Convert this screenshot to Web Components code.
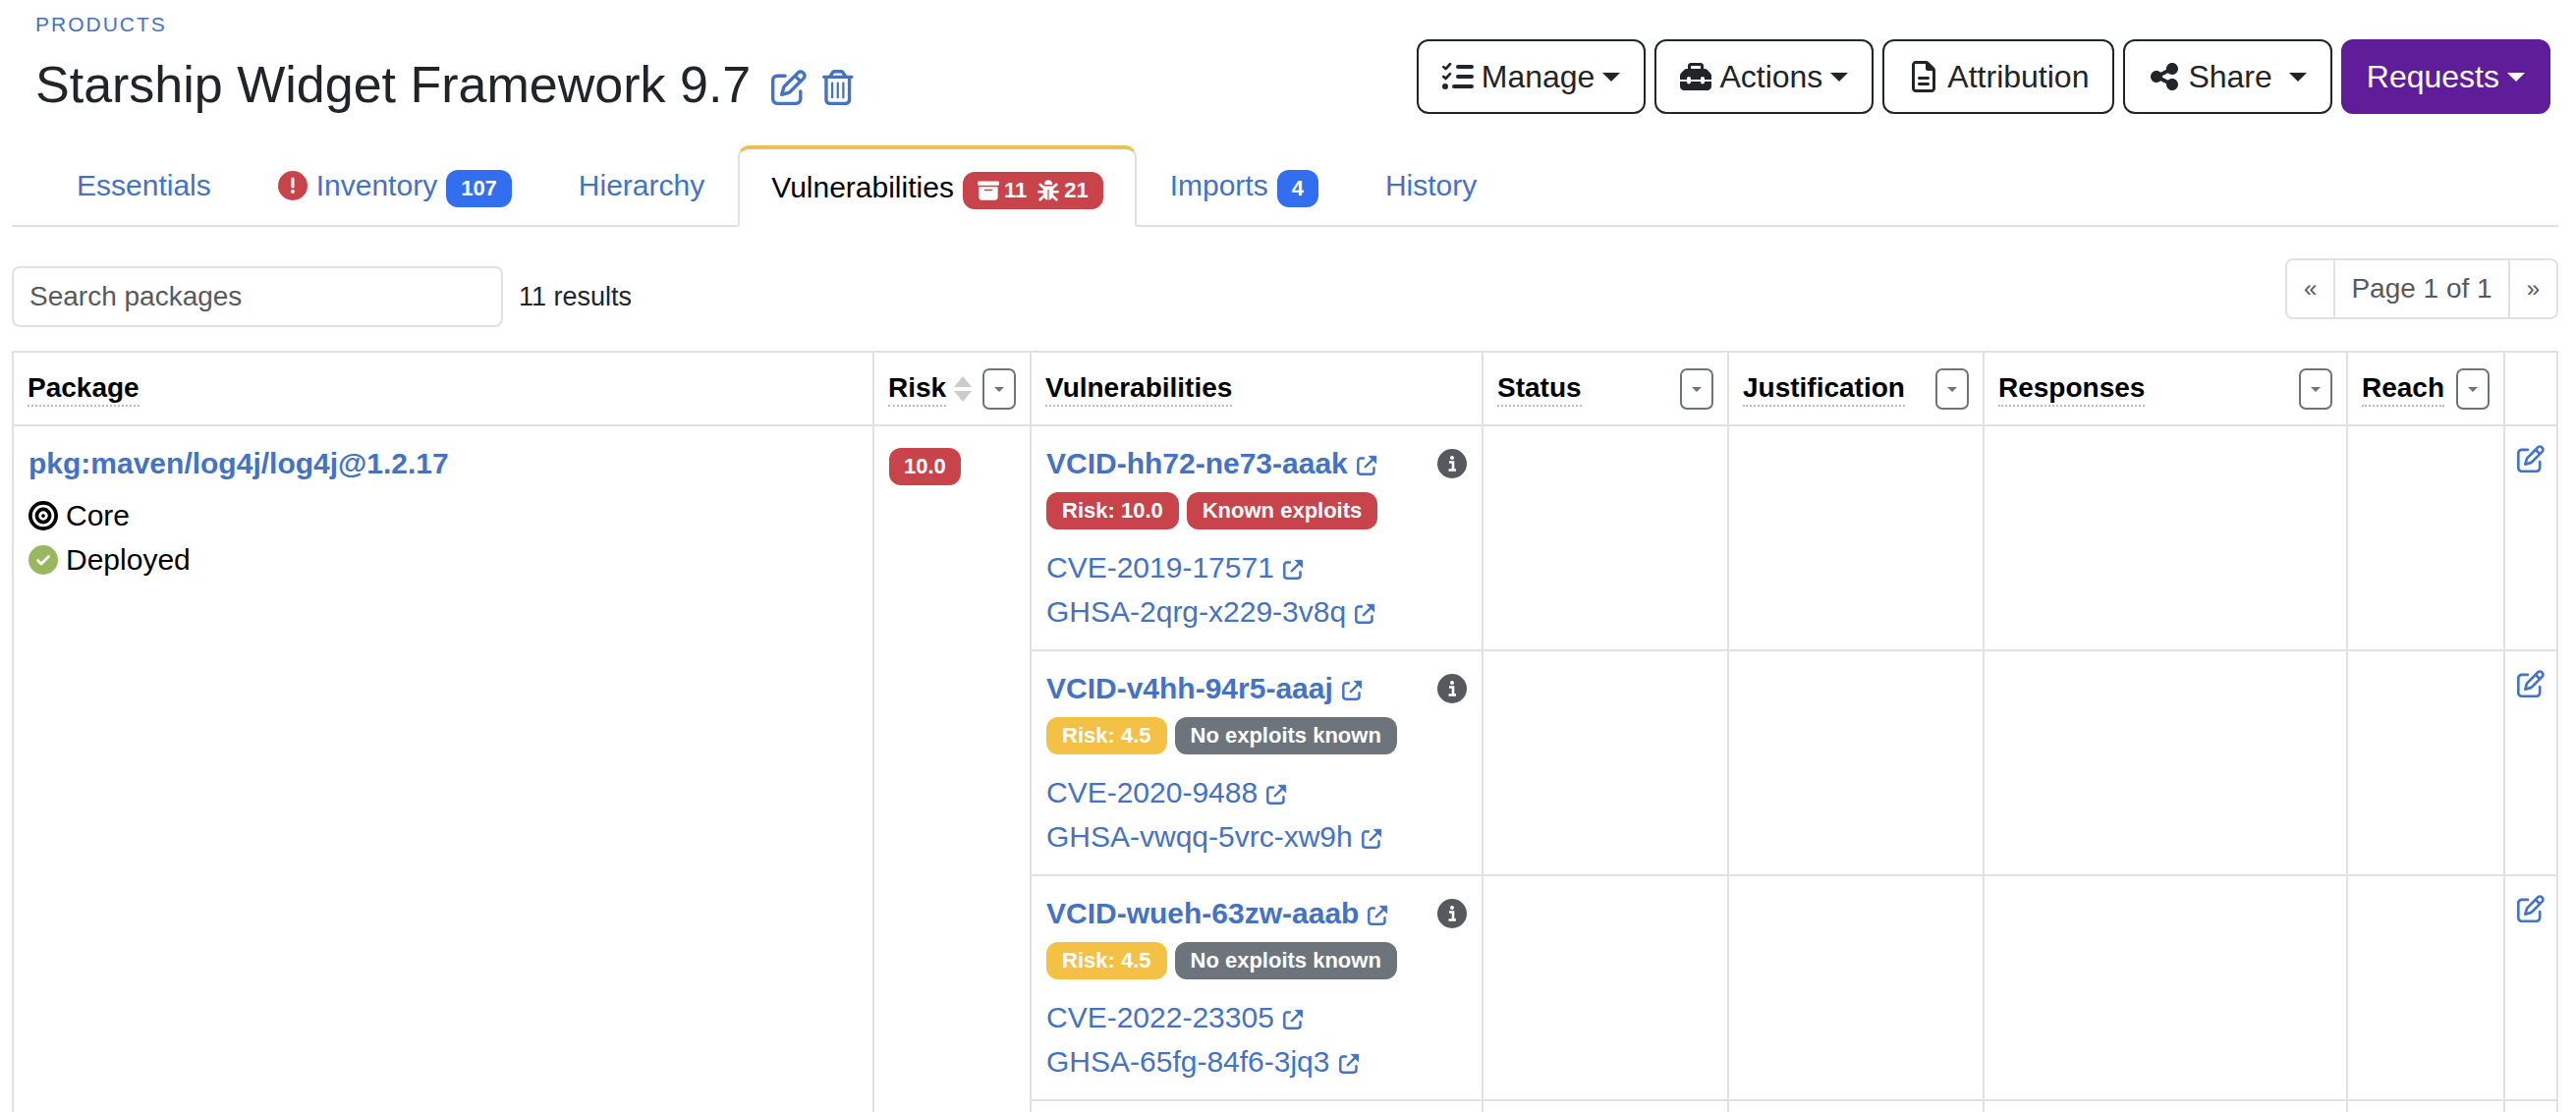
<!DOCTYPE html>
<html lang="en">
<head>
<meta charset="utf-8">
<title>Starship Widget Framework 9.7</title>
<style>
  body {
    --link: #4472c4;
    --line: #dfe1e6;
    --dark: #212529;
    --danger: #c8444a;
    --muted: #565a5e;
    margin: 0;
    height: 100vh;
    overflow: hidden;
    background: #fff;
    color: #000;
    font-family: "Liberation Sans", Arial, sans-serif;
    font-size: 30px;
    line-height: 45px;
  }

  main {
    padding: 10px 18px 0 12px;
  }
</style>
</head>
<body>
<main>
  <product-header name="Starship Widget Framework 9.7">
    <action-button icon="tasks" caret>Manage</action-button>
    <action-button icon="toolbox" caret>Actions</action-button>
    <action-button icon="file">Attribution</action-button>
    <action-button icon="share" caret wide>Share</action-button>
    <action-button primary caret>Requests</action-button>
  </product-header>

  <tab-bar>
    <tab-item>Essentials</tab-item>
    <tab-item>
      <app-icon slot="icon" name="alert" size="30"></app-icon>
      Inventory
      <label-badge slot="badge" color="#326ef0">107</label-badge>
    </tab-item>
    <tab-item>Hierarchy</tab-item>
    <tab-item active>
      Vulnerabilities
      <label-badge slot="badge">
        <app-icon name="archive" size="22"></app-icon><span>11</span>
        <app-icon name="bug" size="22" style="margin-left: 6px"></app-icon><span>21</span>
      </label-badge>
    </tab-item>
    <tab-item>Imports<label-badge slot="badge" color="#326ef0">4</label-badge></tab-item>
    <tab-item>History</tab-item>
  </tab-bar>

  <list-toolbar count="11 results" page="Page 1 of 1"></list-toolbar>
  <vulnerability-table></vulnerability-table>
</main>

<script>
const ICONS = {
  edit: ['0 0 512 512', '<path d="M441 58.9L453.1 71c9.4 9.4 9.4 24.6 0 33.9L424 134.1 377.9 88 407 58.9c9.4-9.4 24.6-9.4 33.9 0zM209.8 256.2L344 121.9 390.1 168 255.8 302.2c-2.9 2.9-6.5 5-10.4 6.1l-58.5 16.7 16.7-58.5c1.1-3.9 3.2-7.5 6.1-10.4zM373.1 25L175.8 222.2c-8.7 8.7-15 19.4-18.3 31.1l-28.6 100c-2.4 8.4-.1 17.4 6.1 23.6s15.2 8.5 23.6 6.1l100-28.6c11.8-3.4 22.5-9.7 31.1-18.3L487 138.9c28.1-28.1 28.1-73.7 0-101.8L474.9 25C446.8-3.1 401.2-3.1 373.1 25zM88 64C39.4 64 0 103.4 0 152V424c0 48.6 39.4 88 88 88H360c48.6 0 88-39.4 88-88V312c0-13.3-10.7-24-24-24s-24 10.7-24 24V424c0 22.1-17.9 40-40 40H88c-22.1 0-40-17.9-40-40V152c0-22.1 17.9-40 40-40H200c13.3 0 24-10.7 24-24s-10.7-24-24-24H88z"/>'],
  trash: ['0 0 448 512', '<path d="M170.5 51.6L151.5 80h145l-19-28.4c-1.5-2.2-4-3.6-6.7-3.6H177.1c-2.7 0-5.2 1.3-6.7 3.6zm147-26.6L354.2 80H368h48 8c13.3 0 24 10.7 24 24s-10.7 24-24 24h-8V432c0 44.2-35.8 80-80 80H112c-44.2 0-80-35.8-80-80V128H24c-13.3 0-24-10.7-24-24S10.7 80 24 80h8H80 93.8l36.7-55.1C140.9 9.4 158.4 0 177.1 0h93.7c18.7 0 36.2 9.4 46.6 24.9zM80 128V432c0 17.7 14.3 32 32 32H336c17.7 0 32-14.3 32-32V128H80zm80 64V400c0 8.8-7.2 16-16 16s-16-7.2-16-16V192c0-8.8 7.2-16 16-16s16 7.2 16 16zm80 0V400c0 8.8-7.2 16-16 16s-16-7.2-16-16V192c0-8.8 7.2-16 16-16s16 7.2 16 16zm80 0V400c0 8.8-7.2 16-16 16s-16-7.2-16-16V192c0-8.8 7.2-16 16-16s16 7.2 16 16z"/>'],
  share: ['0 0 448 512', '<path d="M352 224c53 0 96-43 96-96s-43-96-96-96s-96 43-96 96c0 4 .2 8 .7 11.9l-94.1 47C145.4 170.2 121.9 160 96 160c-53 0-96 43-96 96s43 96 96 96c25.900 0 49.400-10.200 66.600-26.900l94.100 47c-.5 3.900-.7 7.800-.7 11.900c0 53 43 96 96 96s96-43 96-96s-43-96-96-96c-25.900 0-49.400 10.200-66.600 26.900l-94.100-47c.5-3.900 .7-7.800 .7-11.900s-.2-8-.7-11.900l94.100-47C302.600 213.800 326.100 224 352 224z"/>'],
  file: ['0 0 384 512', '<path d="M64 464c-8.8 0-16-7.2-16-16V64c0-8.8 7.2-16 16-16H224v80c0 17.7 14.3 32 32 32h80V448c0 8.8-7.2 16-16 16H64zM64 0C28.7 0 0 28.7 0 64V448c0 35.3 28.7 64 64 64H320c35.3 0 64-28.7 64-64V154.5c0-17-6.7-33.3-18.7-45.3L274.7 18.7C262.7 6.7 246.5 0 229.5 0H64zm56 256c-13.3 0-24 10.7-24 24s10.7 24 24 24H264c13.3 0 24-10.7 24-24s-10.7-24-24-24H120zm0 96c-13.3 0-24 10.7-24 24s10.7 24 24 24H264c13.3 0 24-10.7 24-24s-10.7-24-24-24H120z"/>'],
  tasks: ['0 0 512 512', '<g fill="none" stroke="currentColor" stroke-linecap="round" stroke-linejoin="round"><path stroke-width="42" d="M22 98l34 32 72-78M22 256l34 32 72-78"/><path stroke-width="64" d="M256 96h224M256 256h224M192 416h288"/></g><circle cx="48" cy="416" r="48"/>'],
  toolbox: ['0 0 512 512', '<path fill-rule="evenodd" d="M176 32h160c27 0 48 21 48 48v48h16c18 0 34 7 46 19l47 47c12 12 19 28 19 46v64H400v-16c0-18-14-32-32-32s-32 14-32 32v16H176v-16c0-18-14-32-32-32s-32 14-32 32v16H0v-64c0-18 7-34 19-46l47-47c12-12 28-19 46-19h16V80c0-27 21-48 48-48zm0 48v48h160V80z"/><path d="M0 336h112v8c0 18 14 32 32 32s32-14 32-32v-8h160v8c0 18 14 32 32 32s32-14 32-32v-8h112v80c0 35-29 64-64 64H64c-35 0-64-29-64-64z"/>'],
  archive: ['0 0 512 512', '<rect y="32" width="512" height="104" rx="32"/><path fill-rule="evenodd" d="M32 168h448v248c0 35-29 64-64 64H96c-35 0-64-29-64-64zm144 56c-12 0-20 8-20 20s8 20 20 20h160c12 0 20-8 20-20s-8-20-20-20z"/>'],
  bug: ['0 0 512 512', '<path d="M160 104a96 96 0 0 1 192 0v14H160z"/><path d="M136 150h240v200c0 66-46 122-106 130V230h-28v250c-60-8-106-64-106-130z"/><g fill="none" stroke="currentColor" stroke-width="60" stroke-linecap="round"><path d="M150 190L62 112M362 190l88-78M136 286H32M376 286h104M156 380l-94 92M356 380l94 92"/></g>'],
  external: ['0 0 24 24', '<path fill="none" stroke="currentColor" stroke-width="2.8" stroke-linecap="round" stroke-linejoin="round" d="M8 4H4.500a3 3 0 0 0-3 3v12.500a3 3 0 0 0 3 3H17a3 3 0 0 0 3-3V15M10 14L19 5"/><path d="M14 1.500h8.500V10z" stroke="currentColor" stroke-linejoin="round"/>'],
  alert: ['0 0 30 30', '<circle cx="15" cy="15" r="15" fill="#c8444a"/><path d="M15 8v8" stroke="#fff" stroke-width="3" stroke-linecap="round"/><circle cx="15" cy="21" r="2" fill="#fff"/>'],
  info: ['0 0 30 30', '<circle cx="15" cy="15" r="15"/><circle cx="15" cy="9" r="2" fill="#fff"/><path d="M12 13.5h4V21M11.5 21.5h7.5" fill="none" stroke="#fff" stroke-width="2.6"/>'],
  core: ['0 0 512 512', '<g fill="none" stroke="currentColor" stroke-width="64"><circle cx="256" cy="256" r="224"/><circle cx="256" cy="256" r="112"/></g><circle cx="256" cy="256" r="32"/>'],
  deployed: ['0 0 30 30', '<circle cx="15" cy="15" r="15" fill="#99b75f"/><path d="M9.5 15.5l3.5 3.5 7.5-7.5" fill="none" stroke="#fff" stroke-width="2.8" stroke-linecap="round" stroke-linejoin="round"/>'],
  sort: ['0 0 18 26', '<path d="M9 0l9 11H0zM9 26l9-11H0z"/>'],
  caret: ['0 0 18 9', '<path d="M0 0h18L9 9z"/>']
};

class AppIcon extends HTMLElement {
  connectedCallback() {
    const [box, body] = ICONS[this.getAttribute('name')];
    const size = this.getAttribute('size') || 32;
    this.attachShadow({ mode: 'open' }).innerHTML = `
      <style>
        :host { display: inline-flex; justify-content: center; flex: none; }
        svg { display: block; fill: currentColor; }
      </style>
      <svg viewBox="${box}" height="${size}" aria-hidden="true">${body}</svg>
    `;
  }
}

class LabelBadge extends HTMLElement {
  connectedCallback() {
    this.attachShadow({ mode: 'open' }).innerHTML = `
      <style>
        :host {
          display: inline-flex;
          align-items: center;
          gap: 5px;
          padding: 8px 15px;
          border-radius: 12px;
          background: ${this.getAttribute('color') || 'var(--danger)'};
          color: #fff;
          font-size: 22px;
          font-weight: bold;
          line-height: 22px;
          white-space: nowrap;
        }
      </style>
      <slot></slot>
    `;
  }
}

class ActionButton extends HTMLElement {
  connectedCallback() {
    const icon = this.getAttribute('icon');
    this.attachShadow({ mode: 'open' }).innerHTML = `
      <style>
        :host { display: block; }
        button {
          display: flex;
          align-items: center;
          gap: 8px;
          padding: 12px 24px;
          border: 2px solid var(--dark);
          border-radius: 12px;
          background: #fff;
          color: var(--dark);
          font: 32px/48px "Liberation Sans", Arial, sans-serif;
          cursor: pointer;
        }
        .icon { width: 32px; }
        :host([wide]) .caret { margin-left: 9px; }
        :host([primary]) button { background: #5f1d99; border-color: #5f1d99; color: #fff; }
      </style>
      <button type="button">
        ${icon ? `<app-icon class="icon" name="${icon}" size="32"></app-icon>` : ''}
        <slot></slot>
        ${this.hasAttribute('caret') ? '<app-icon class="caret" name="caret" size="9"></app-icon>' : ''}
      </button>
    `;
  }
}

class ProductHeader extends HTMLElement {
  connectedCallback() {
    this.attachShadow({ mode: 'open' }).innerHTML = `
      <style>
        :host {
          display: flex;
          justify-content: space-between;
          align-items: flex-start;
          padding: 0 8px 0 24px;
        }
        a { color: var(--link); text-decoration: none; }
        .parent {
          display: block;
          margin-bottom: 15px;
          font-size: 21px;
          line-height: 30px;
          letter-spacing: 2px;
        }
        .title { display: flex; align-items: center; gap: 16px; }
        .title a { padding-top: 6px; }
        .title app-icon { display: flex; }
        h1 {
          margin: 0 5px 0 0;
          color: var(--dark);
          font-size: 52px;
          font-weight: normal;
          line-height: 62px;
        }
        .actions { display: flex; gap: 9px; padding-top: 30px; }
      </style>
      <div>
        <a class="parent" href="#">PRODUCTS</a>
        <div class="title">
          <h1>${this.getAttribute('name')}</h1>
          <a href="#" aria-label="Edit"><app-icon name="edit" size="36"></app-icon></a>
          <a href="#" aria-label="Delete"><app-icon name="trash" size="36"></app-icon></a>
        </div>
      </div>
      <div class="actions"><slot></slot></div>
    `;
  }
}

class TabBar extends HTMLElement {
  connectedCallback() {
    this.attachShadow({ mode: 'open' }).innerHTML = `
      <style>
        :host { display: block; margin-top: 31px; }
        nav {
          display: flex;
          align-items: flex-start;
          height: 81px;
          padding-left: 32px;
          border-bottom: 2px solid var(--line);
        }
      </style>
      <nav><slot></slot></nav>
    `;
  }
}

class TabItem extends HTMLElement {
  connectedCallback() {
    this.attachShadow({ mode: 'open' }).innerHTML = `
      <style>
        :host { display: block; }
        a {
          display: flex;
          align-items: flex-end;
          gap: 9px;
          padding: 16px 32px;
          border: 2px solid transparent;
          color: var(--link);
          text-decoration: none;
        }
        :host([active]) a {
          border-color: #e9c155 var(--line) #fff;
          border-top-width: 4px;
          border-radius: 12px 12px 0 0;
          background: #fff;
          color: #000;
        }
        ::slotted([slot=icon]) { align-self: center; }
      </style>
      <a href="#"><slot name="icon"></slot><span><slot></slot></span><slot name="badge"></slot></a>
    `;
  }
}

class ListToolbar extends HTMLElement {
  connectedCallback() {
    this.attachShadow({ mode: 'open' }).innerHTML = `
      <style>
        :host {
          display: flex;
          justify-content: space-between;
          align-items: flex-start;
          margin: 32px 0 24px;
          font-size: 27px;
        }
        .search { display: flex; align-items: center; gap: 16px; padding-top: 8px; color: var(--dark); }
        input {
          box-sizing: border-box;
          width: 500px;
          height: 62px;
          padding: 0 16px;
          border: 2px solid var(--line);
          border-radius: 8px;
          font: 28px "Liberation Sans", Arial, sans-serif;
        }
        input::placeholder { color: var(--muted); opacity: 1; }
        .pages {
          display: flex;
          border: 2px solid var(--line);
          border-radius: 8px;
          color: var(--muted);
          font-size: 28px;
          line-height: 58px;
        }
        .pages > * { padding: 0 16px; color: inherit; text-decoration: none; }
        .pages > * + * { border-left: 2px solid var(--line); }
        .pages a { padding: 0 17px; font-size: 24px; }
      </style>
      <div class="search">
        <input type="search" placeholder="Search packages" aria-label="Search packages">
        <span>${this.getAttribute('count')}</span>
      </div>
      <div class="pages">
        <a href="#" aria-label="Previous page">«</a>
        <span>${this.getAttribute('page')}</span>
        <a href="#" aria-label="Next page">»</a>
      </div>
    `;
  }
}

// Column title with optional sort arrows and filter drop-down
class ColumnTitle extends HTMLElement {
  connectedCallback() {
    this.attachShadow({ mode: 'open' }).innerHTML = `
      <style>
        :host { display: flex; align-items: center; height: 42px; }
        span { border-bottom: 2px dotted #bbb; line-height: 34px; }
        .sort { margin-left: 8px; color: #ccc; }
        button {
          display: flex;
          align-items: center;
          justify-content: center;
          width: 34px;
          height: 42px;
          margin-left: auto;
          padding: 0;
          border: 2px solid #6c757d;
          border-radius: 7px;
          background: #fff;
          color: #6c757d;
        }
      </style>
      <span><slot></slot></span>
      ${this.hasAttribute('sort') ? '<app-icon class="sort" name="sort" size="26"></app-icon>' : ''}
      ${this.hasAttribute('filter') ? '<button type="button" aria-label="Filter"><app-icon name="caret" size="5"></app-icon></button>' : ''}
    `;
  }
}

class VulnerabilityEntry extends HTMLElement {
  connectedCallback() {
    const known = this.hasAttribute('exploited');
    const link = id => `<a href="#">${id}<app-icon name="external" size="21"></app-icon></a>`;
    this.attachShadow({ mode: 'open' }).innerHTML = `
      <style>
        :host { display: block; }
        a { display: flex; align-items: center; gap: 9px; color: var(--link); text-decoration: none; }
        a app-icon { padding-top: 3px; }
        .head { display: flex; align-items: center; justify-content: space-between; font-weight: bold; }
        .head > app-icon { color: var(--muted); }
        .badges { display: flex; gap: 8px; margin: 7px 0 16px; }
        .badges label-badge { padding: 8px 16px; }
      </style>
      <div class="head">${link(this.getAttribute('vcid'))}<app-icon name="info" size="30"></app-icon></div>
      <div class="badges">
        <label-badge color="${known ? 'var(--danger)' : '#f4c145'}">Risk: ${this.getAttribute('risk')}</label-badge>
        <label-badge color="${known ? 'var(--danger)' : '#6d747c'}">${known ? 'Known exploits' : 'No exploits known'}</label-badge>
      </div>
      ${this.getAttribute('aliases').split(' ').map(link).join('')}
    `;
  }
}

class VulnerabilityTable extends HTMLElement {
  constructor() {
    super();
    this.attachShadow({ mode: 'open' });
    this._rows = [
      { vcid: 'VCID-hh72-ne73-aaak', risk: '10.0', exploited: true, aliases: 'CVE-2019-17571 GHSA-2qrg-x229-3v8q' },
      { vcid: 'VCID-v4hh-94r5-aaaj', risk: '4.5', aliases: 'CVE-2020-9488 GHSA-vwqq-5vrc-xw9h' },
      { vcid: 'VCID-wueh-63zw-aaab', risk: '4.5', aliases: 'CVE-2022-23305 GHSA-65fg-84f6-3jq3' }
    ];
  }

  connectedCallback() {
    this.render();
  }

  render() {
    const packageCells = `
      <td rowspan="${this._rows.length + 1}">
        <a class="package" href="#">pkg:maven/log4j/log4j@1.2.17</a>
        <div class="state"><app-icon name="core" size="30"></app-icon>Core</div>
        <div class="state"><app-icon name="deployed" size="30"></app-icon>Deployed</div>
      </td>
      <td rowspan="${this._rows.length + 1}"><label-badge class="risk">10.0</label-badge></td>
    `;

    const rowsHtml = this._rows.map((row, i) => `
      <tr>
        ${i === 0 ? packageCells : ''}
        <td><vulnerability-entry vcid="${row.vcid}" risk="${row.risk}" aliases="${row.aliases}" ${row.exploited ? 'exploited' : ''}></vulnerability-entry></td>
        <td></td><td></td><td></td><td></td>
        <td class="edit"><a href="#" aria-label="Edit ${row.vcid}"><app-icon name="edit" size="28"></app-icon></a></td>
      </tr>
    `).join('');

    this.shadowRoot.innerHTML = `
      <style>
        :host { display: block; }
        table { width: 100%; table-layout: fixed; border-collapse: collapse; }
        th, td {
          padding: 15px 15px 16px;
          border: 2px solid var(--line);
          text-align: left;
          vertical-align: top;
        }
        th { padding: 16px 14px 15px; font-size: 28px; }
        a { color: var(--link); text-decoration: none; }
        .package { display: block; margin-bottom: 8px; font-weight: bold; }
        .state { display: flex; align-items: center; gap: 8px; }
        .risk { margin-top: 7px; vertical-align: top; }
        .edit { padding-left: 0; padding-right: 0; }
        .edit a { display: flex; justify-content: center; padding-top: 4px; }
        .more td { height: 196px; }
      </style>
      <table>
        <colgroup>
          <col>
          <col style="width: 160px">
          <col style="width: 460px">
          <col style="width: 250px">
          <col style="width: 260px">
          <col style="width: 370px">
          <col style="width: 160px">
          <col style="width: 54px">
        </colgroup>
        <thead>
          <tr>
            <th><column-title>Package</column-title></th>
            <th><column-title sort filter>Risk</column-title></th>
            <th><column-title>Vulnerabilities</column-title></th>
            <th><column-title filter>Status</column-title></th>
            <th><column-title filter>Justification</column-title></th>
            <th><column-title filter>Responses</column-title></th>
            <th><column-title filter>Reach</column-title></th>
            <th></th>
          </tr>
        </thead>
        <tbody>
          ${rowsHtml}
          <tr class="more"><td></td><td></td><td></td><td></td><td></td><td></td></tr>
        </tbody>
      </table>
    `;
  }
}

customElements.define('app-icon', AppIcon);
customElements.define('label-badge', LabelBadge);
customElements.define('action-button', ActionButton);
customElements.define('product-header', ProductHeader);
customElements.define('tab-bar', TabBar);
customElements.define('tab-item', TabItem);
customElements.define('list-toolbar', ListToolbar);
customElements.define('column-title', ColumnTitle);
customElements.define('vulnerability-entry', VulnerabilityEntry);
customElements.define('vulnerability-table', VulnerabilityTable);
</script>
</body>
</html>
